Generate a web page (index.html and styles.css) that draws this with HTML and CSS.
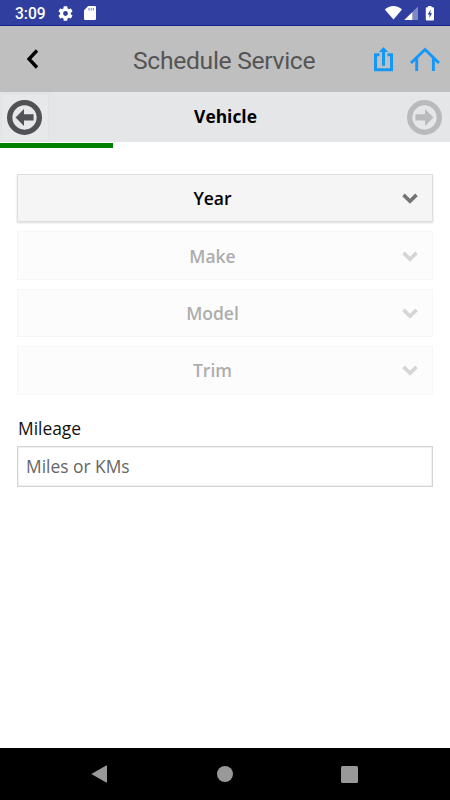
FILE: index.html
```html
<!DOCTYPE html>
<html lang="en">
<head>
<meta charset="utf-8">
<title>Schedule Service</title>
<link rel="stylesheet" href="styles.css">
</head>
<body>
<div class="screen">
  <div class="status">
    <span class="clock">3:09</span>
    <svg class="gear" width="15" height="15" viewBox="2 2 20 20"><path fill="#fff" d="M19.14 12.94c.04-.3.06-.61.06-.94 0-.32-.02-.64-.07-.94l2.03-1.58c.18-.14.23-.41.12-.61l-1.92-3.32c-.12-.22-.37-.29-.59-.22l-2.39.96c-.5-.38-1.03-.7-1.62-.94l-.36-2.54c-.04-.24-.24-.41-.48-.41h-3.84c-.24 0-.43.17-.47.41l-.36 2.54c-.59.24-1.13.57-1.62.94l-2.39-.96c-.22-.08-.47 0-.59.22L2.74 8.87c-.12.21-.08.47.12.61l2.03 1.58c-.05.3-.09.63-.09.94s.02.64.07.94l-2.03 1.58c-.18.14-.23.41-.12.61l1.92 3.32c.12.22.37.29.59.22l2.39-.96c.5.38 1.03.7 1.62.94l.36 2.54c.05.24.24.41.48.41h3.84c.24 0 .44-.17.47-.41l.36-2.54c.59-.24 1.13-.56 1.62-.94l2.39.96c.22.08.47 0 .59-.22l1.92-3.32c.12-.22.07-.47-.12-.61l-2.01-1.58zM12 15.2a3.2 3.2 0 1 1 0-6.400 3.200 3.200 0 0 1 0 6.400z"/></svg>
    <svg class="card" width="12" height="14" viewBox="0 0 12 14"><path fill="#fff" d="M4.2 0H10.8Q12 0 12 1.2V12.8Q12 14 10.800 14H1.200Q0 14 0 12.800V4.200Z"/><path stroke="#7f89c9" stroke-width="1.100" d="M5 2v2.500M7.200 2v2.500M9.400 2v2.500"/></svg>
    <svg class="signals" width="52" height="16" viewBox="384 5 52 16"><path fill="#fff" d="M384.800 9.500C389.500 4.700 397.500 4.700 402 9.500L393.500 19.500Z"/><path fill="#8088c2" d="M418 6.500V20H404.300Z"/><path fill="#fff" d="M412.300 12.200V20H404.300Z"/><path fill="#fff" d="M428 6h3.500v1.300h1.500q1 0 1 1V19.500q0 1-1 1h-6.200q-1 0-1-1V8.300q0-1 1-1H428Z"/><path fill="#303f9f" d="M430.700 9.500L427.700 14.400H429.500V18L432 13.200H430.300Z"/></svg>
  </div>
  <header class="header">
    <svg class="back" width="14" height="20" viewBox="0 0 14 20"><path fill="none" stroke="#000" stroke-width="3.300" d="M11 1.500L3 10L11 18.500"/></svg>
    <h1 class="title">Schedule Service</h1>
    <svg class="share" width="20" height="26" viewBox="373 46 20 26"><path fill="none" stroke="#1398fa" stroke-width="3" d="M379.500 54.700H375.500V69.700H391.500V54.700H387.500M383.500 65.800V50"/><path fill="#1398fa" d="M383.500 47L388.200 52H378.800Z"/></svg>
    <svg class="home" width="30" height="25" viewBox="410 47 30 25"><path fill="none" stroke="#1398fa" stroke-width="2.900" d="M411 63L425 49.500L439 63M416.700 58.500V71M433.400 58.500V71"/></svg>
  </header>
  <div class="stepbar">
    <div class="step-back"><svg width="35" height="35" viewBox="0 0 34 34"><circle cx="17" cy="17" r="14.400" fill="none" stroke="#515256" stroke-width="5.200"/><path fill="#515256" d="M8.300 17L16.500 8.700V13.800H25.800V20H16.500V25.200Z"/></svg></div>
    <h2 class="step-title">Vehicle</h2>
    <svg class="step-next" width="35" height="35" viewBox="0 0 34 34"><circle cx="17" cy="17" r="14.400" fill="none" stroke="#b9babc" stroke-width="5.200"/><path fill="#b9babc" d="M25.700 17L17.500 8.700V13.800H8.200V20H17.500V25.200Z"/></svg>
  </div>
  <div class="progress"><div class="progress-fill"></div></div>
  <main class="form">
    <div class="select active">Year<svg class="chevron" width="16" height="11" viewBox="0 0 16 11"><path fill="none" stroke="#747474" stroke-width="3.600" d="M1.500 1.900L8 8.300L14.500 1.900"/></svg></div>
    <div class="select make">Make<svg class="chevron" width="16" height="11" viewBox="0 0 16 11"><path fill="none" stroke="#d5d5d5" stroke-width="3.600" d="M1.500 1.900L8 8.300L14.500 1.900"/></svg></div>
    <div class="select model">Model<svg class="chevron" width="16" height="11" viewBox="0 0 16 11"><path fill="none" stroke="#d5d5d5" stroke-width="3.600" d="M1.500 1.900L8 8.300L14.500 1.900"/></svg></div>
    <div class="select trim">Trim<svg class="chevron" width="16" height="11" viewBox="0 0 16 11"><path fill="none" stroke="#d5d5d5" stroke-width="3.600" d="M1.500 1.900L8 8.300L14.500 1.900"/></svg></div>
    <label class="label" for="mileage">Mileage</label>
    <input class="input" id="mileage" placeholder="Miles or KMs">
  </main>
  <nav class="nav">
    <svg width="16" height="18" viewBox="0 0 16 18"><path fill="#999" d="M.3 9L15.200.4Q16 0 16 1V17Q16 18 15.200 17.600Z"/></svg>
    <svg class="nav-home" width="16" height="16" viewBox="0 0 16 16"><circle cx="8" cy="8" r="8" fill="#999"/></svg>
    <svg width="17" height="17" viewBox="0 0 17 17"><rect width="17" height="17" rx="1.500" fill="#999"/></svg>
  </nav>
</div>
</body>
</html>
```
FILE: styles.css
```css
* { box-sizing: border-box; }
body { margin: 0; background: #fff; font-family: "Open Sans", sans-serif; }
.screen { width: 450px; height: 800px; display: flex; flex-direction: column; overflow: hidden; }
.status { height: 26px; flex: none; display: flex; align-items: center; background: #303f9f; border-bottom: 1px solid #10228d; padding: 1px 14px 0 15px; }
.clock { width: 43px; padding-top: 2px; font: 500 15.6px/24px Roboto, sans-serif; color: #fff; }
.card { margin-left: 11px; }
.signals { margin-left: auto; }
.header { height: 66px; flex: none; display: flex; align-items: center; background: #bfbfbf; padding: 0 10px 0 26px; }
.title { flex: 1; margin: 3px 0 0 93px; font: 400 24.7px/30px Roboto, sans-serif; letter-spacing: -0.32px; color: #555; white-space: nowrap; }
.share { margin-right: 17px; }
.home { margin-top: 1px; }
.stepbar { height: 50px; flex: none; display: flex; align-items: center; background: #e5e6e8; padding: 0 8px 0 1px; }
.step-back { width: 48px; height: 48px; display: flex; align-items: center; padding-left: 5px; border: 1px solid #e0e1e3; background: #e7e8ea; }
.step-title { flex: 1; margin: 0; padding: 0 5px 2px 0; text-align: center; font-size: 17.4px; line-height: 24px; font-weight: 700; }
.progress { height: 6px; flex: none; }
.progress-fill { width: 25%; height: 5px; background: #008000; margin-top: 1px; }
.form { flex: 1; display: flex; flex-direction: column; padding: 26px 17px 0; }
.select { display: flex; align-items: center; justify-content: center; position: relative; height: 49px; flex: none; margin-bottom: 9px; padding-right: 25px; background: #fcfcfc; border: 1px solid #f6f6f6; color: #adadad; font-size: 17.5px; font-weight: 600; }
.select.active { height: 48px; background: #f5f5f5; border-color: #dedede; box-shadow: 0 1px 2px #0002; color: #000; }
.select.model { height: 48px; }
.select.trim { padding-bottom: 2px; }
.chevron { position: absolute; right: 14px; top: 18px; }
.make .chevron { top: 19px; }
.label { margin: 11px 0 5px 1px; font-size: 17.4px; line-height: 26px; color: #111; }
.input { height: 41px; padding: 0 8px 1px; border: 1px solid #d4d4d4; outline: 1px solid #f0f0f0; outline-offset: -2px; background: #fff; font: 400 17.4px "Open Sans", sans-serif; }
.input::placeholder { color: #666; }
.nav { height: 52px; flex: none; display: flex; align-items: center; justify-content: space-between; padding: 0 92px 0 91px; background: #000; }
.nav-home { margin-left: 1px; }
```
